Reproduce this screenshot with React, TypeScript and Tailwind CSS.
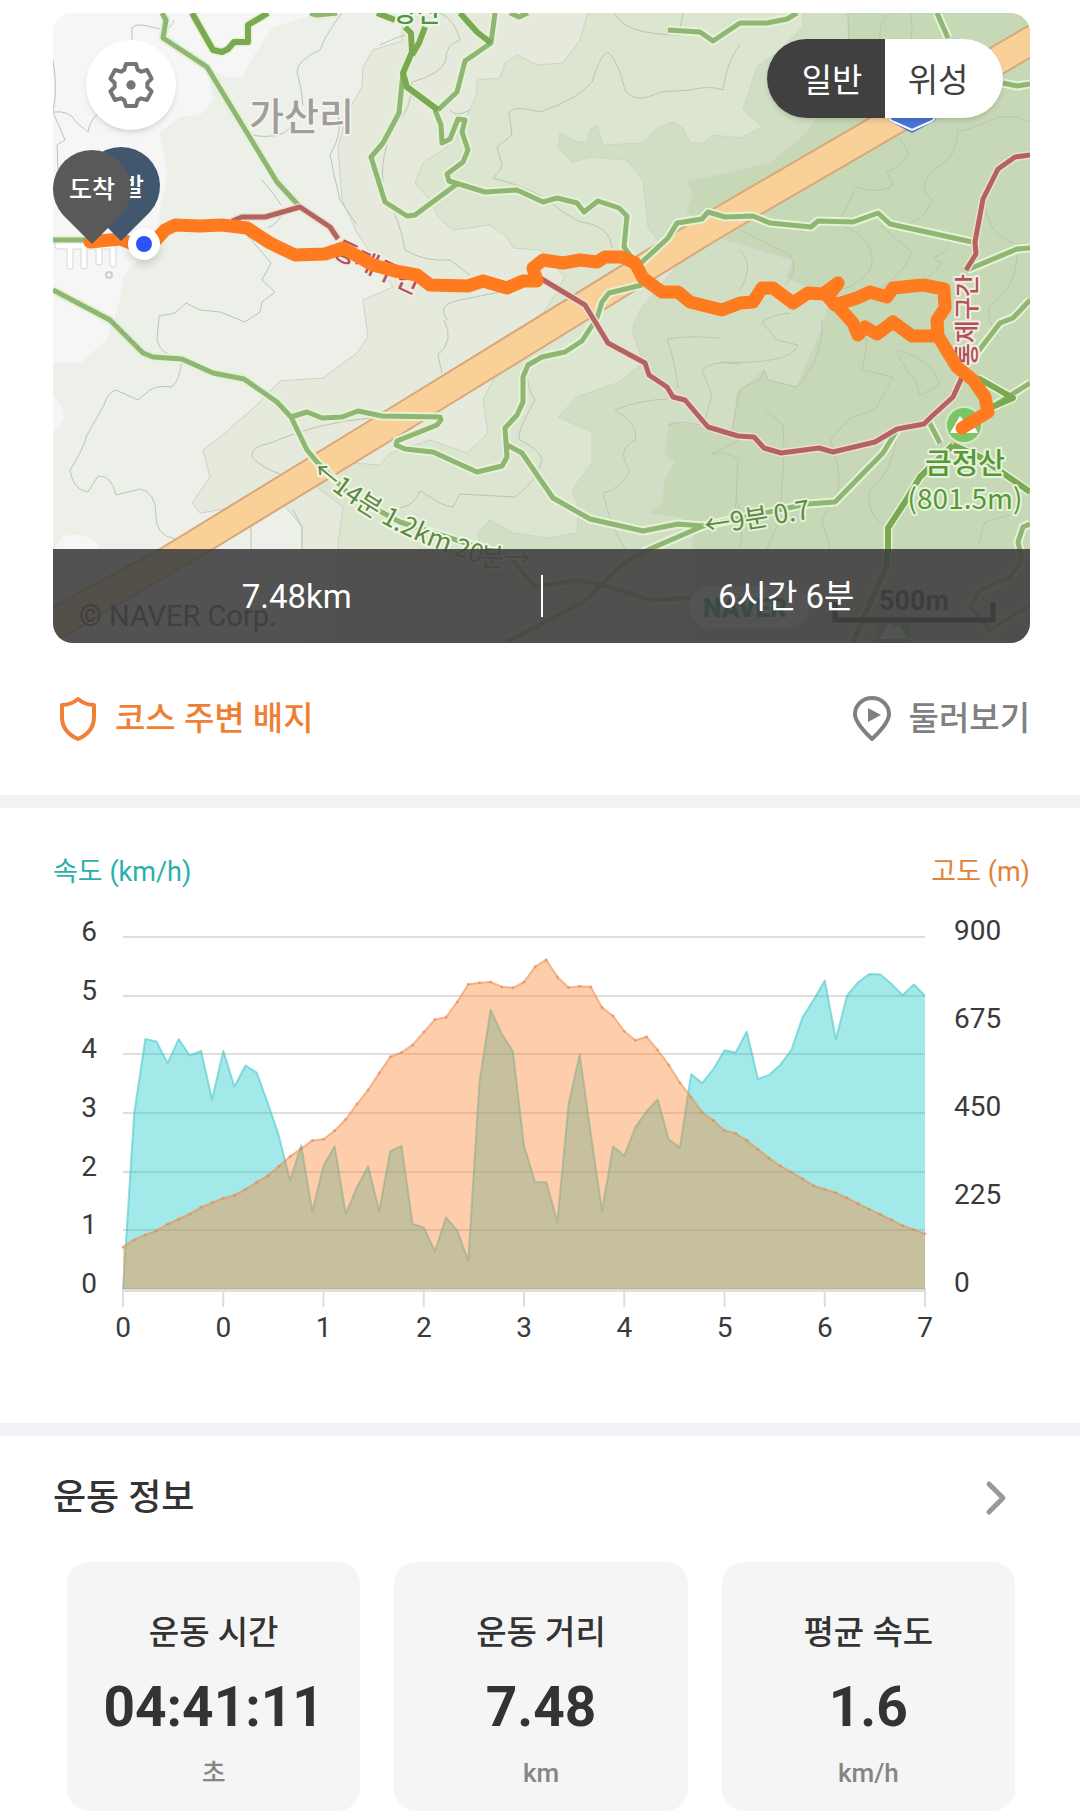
import React from 'react';

const SPEED = [
  0, 2.98, 4.26, 4.22, 3.85, 4.26, 3.98, 4.06, 3.23, 4.06, 3.45, 3.81, 3.69, 3.17, 2.61, 1.85, 2.45, 1.32,
  2.1, 2.43, 1.28, 1.73, 2.09, 1.33, 2.35, 2.44, 1.11, 1.05, 0.64, 1.22, 1.0, 0.48, 3.52, 4.76, 4.35, 4.05,
  2.44, 1.82, 1.82, 1.14, 3.15, 4.0, 2.64, 1.33, 2.43, 2.27, 2.76, 3.03, 3.23, 2.55, 2.41, 3.66, 3.51, 3.75,
  4.07, 4.03, 4.39, 3.58, 3.65, 3.82, 4.07, 4.63, 4.93, 5.26, 4.26, 5.0, 5.23, 5.37, 5.36, 5.2, 5.01, 5.19, 5.0,
];

const ALTITUDE = [
  107, 126, 138, 149, 166, 179, 192, 209, 221, 232, 240, 255, 273, 290, 314, 339, 359, 380,
  383, 405, 434, 473, 509, 552, 594, 605, 624, 657, 689, 695, 734, 779, 783, 785, 773, 770,
  785, 824, 842, 798, 771, 774, 773, 720, 698, 659, 636, 645, 611, 573, 528, 491, 452, 431,
  405, 398, 380, 357, 335, 315, 299, 282, 264, 255, 246, 233, 218, 204, 191, 177, 162, 152, 141,
];

const PLOT = { left: 123, right: 925, top: 937, bottom: 1289 };

const plotX = (i: number) => PLOT.left + (i * (PLOT.right - PLOT.left)) / 72;
const plotY = (ratio: number) => PLOT.bottom - ratio * (PLOT.bottom - PLOT.top);

const toLine = (values: number[], max: number) =>
  values.map((v, i) => `${plotX(i).toFixed(1)},${plotY(v / max).toFixed(1)}`).join(' ');

const toArea = (values: number[], max: number) =>
  `${PLOT.left},${PLOT.bottom} ${toLine(values, max)} ${PLOT.right},${PLOT.bottom}`;

const CONTOURS = [
  'M132 40V28Q136 23 147 26L160 29Q172 30 174 20',
  'M342 13Q325 35 320 50Q297 60 297 72Q302 90 303 105',
  'M53 60Q58 90 53 112Q70 110 76 122L88 132Q90 120 98 114',
  'M53 112L65 140L57 145L58 170',
  'M250 135Q280 140 290 128M336 110Q345 130 330 155Q335 180 340 200L357 225',
  'M262 180Q275 195 281 205M268 228Q280 222 282 212',
  'M247 235L260 250L271 263L262 280L275 292L262 302L260 312L245 322L220 312L200 310L186 303L175 313L159 316L157 340Q160 355 182 359Q180 380 172 387Q158 385 150 390L138 400L116 390Q108 392 104 405L87 435Q82 452 70 470Q73 490 88 492L98 476Q112 475 116 495L140 489Q156 492 156 515Q155 535 175 539',
  'M380 45Q395 38 405 35M440 13Q455 20 460 40Q445 45 446 60Q440 75 412 82Q412 110 395 125Q375 165 387 200Q400 220 405 250Q425 262 450 260L470 275',
  'M450 110Q455 118 470 110',
  'M493 178Q500 172 502 165L497 147L512 135L509 112Q515 105 540 112Q580 98 592 82Q600 55 608 52Q618 60 625 90Q635 105 660 92L690 90Q710 85 723 90Q727 60 740 45',
  'M493 178Q540 190 560 210L580 222Q610 225 612 248',
  'M614 13Q625 35 680 35M683 13L680 28',
  'M444 320Q455 340 438 355Q440 365 442 373M448 320Q435 305 460 300L500 292',
  'M252 457Q250 447 270 443Q320 422 370 418M252 457Q262 468 280 474M251 525V549M293 510L302 527V549',
  'M528 367Q525 385 535 400Q515 435 520 440Q540 450 542 460Q538 480 515 497L460 494L453 507Q440 505 430 497L420 491Q415 505 400 508',
  'M615 410Q640 400 667 399M615 410Q640 425 635 440Q615 450 630 470Q620 490 603 493Q610 525 625 549',
  'M667 340Q680 335 720 338M667 340Q675 360 678 388M740 364Q710 360 702 370L712 395Q708 410 705 420',
  'M668 425Q680 420 700 425M735 520L738 460Q730 450 712 454L740 440',
  'M848 13Q850 50 846 60M911 13Q915 40 904 60M880 40Q878 20 890 13',
  'M900 138L909 155Q895 170 887 172L893 185Q880 195 855 187Q848 210 840 217L800 232',
  'M1030 122Q1010 112 990 120Q970 130 958 131Q955 160 940 165Q920 180 925 192L932 200Q925 220 905 225',
  'M840 225Q880 240 870 270Q850 295 820 290M880 225L912 252Q905 275 870 295M947 240Q955 250 933 258L942 263Q930 280 915 283',
  'M740 230L790 255Q800 270 785 285M740 250Q755 265 740 290M720 362Q790 365 798 345L777 340L762 322Q770 315 790 313',
  'M822 320Q825 355 797 387L768 380L764 370L761 379L740 389L732 430M844 320Q870 330 866 350L862 370L893 377L875 410L850 418L830 440Q842 470 838 490L822 520L830 549',
  'M895 350Q920 355 933 370L940 385L920 395L915 380Q905 370 897 352',
  'M784 453L780 520L767 549M765 410L783 425L784 450M735 495Q745 520 740 549',
  'M897 430Q895 470 870 490Q865 515 888 528M1010 515L985 522L978 545',
  'M985 205Q990 245 1030 245M1017 255Q1015 290 990 305Q985 320 1000 340',
];

const TRAILS = [
  'M162 13L166 20L163 38L207 67L277 182L300 207',
  'M310 13L317 15L337 13',
  'M53 240H90',
  'M53 290L110 320L143 353L153 357L182 359L213 373L244 379L277 402L291 417L307 450L317 462L350 495L400 522L510 557L535 587L580 580L603 585L650 600L690 598',
  'M291 417L307 412L322 418L342 417L358 411L382 416L440 417L441 420L437 425L397 441L396 445L405 449L433 452L477 472L502 466L507 457L505 428L517 415L523 402V377L528 365L542 357L565 352L582 341L597 318L602 302L609 293L642 285',
  'M636 268L642 262L668 238L677 223L702 219L708 212L725 217L753 216L770 223L811 227L818 221L853 222L878 213L890 224L972 242',
  'M507 445L522 453L553 498L590 519L643 531L678 524L703 526L650 549L625 562L583 602L507 642',
  'M495 13L491 43L465 61L457 92L438 110',
  'M403 73L399 113L383 143L371 157L385 202L407 216L415 215L457 184',
  'M435 110L441 125L442 143L450 139L458 119L465 120L462 132L468 150L463 162L447 174L449 181L485 192L517 190L543 202L557 198L577 203L584 212L598 201L619 208L627 216L624 247L632 258',
  'M510 13L519 17L528 13',
  'M668 30L700 32L713 41L740 23H767L787 19L797 13',
  'M937 13L948 38',
  'M1003 83L1017 86L1030 84',
  'M967 270L1017 249L1030 248',
  'M1030 300L1013 318L1000 323L977 353',
  'M1030 383L992 407',
  'M897 430L883 453L835 502L807 504L703 526',
  'M928 420L940 443',
  'M1030 524L1023 527L1018 542L1022 560L1010 577L980 590L970 607L990 630L1030 605',
];

const MAIN_TRAILS = [
  'M192 13L213 50L222 52L228 49L234 42H248V25L268 13',
  'M377 13L395 20',
  'M460 13L477 32L491 43',
  'M405 27L411 33L412 52L403 73L407 87L438 110',
  'M425 27L419 43L412 55',
  'M978 378L1013 398L992 407',
  'M953 445L920 477L905 502L888 528V549L886 567L853 642',
  'M953 445L980 457L1030 492',
];

const CLOSED_TRAILS = [
  'M232 221L242 217H265L300 207L330 227L338 239',
  'M540 278L585 305L608 343L645 363L649 375L667 387L673 397L685 400L708 427L738 436L754 437L764 448L781 453L819 448L833 452L875 442L897 429L924 424L931 417L953 397L963 375',
  'M1030 155L1015 157L998 169L983 199L975 242L976 254L966 270',
];

const TRACK =
  'M90 242L120 239L133 244L152 244L165 230L175 225L200 226L222 225L247 228L270 243L295 255L325 254L343 248L373 265L395 271L417 275L430 285L468 286L483 281L507 288L523 281L537 281L533 268L543 260L563 263L580 260L597 262L605 257L622 257L635 263L643 278L662 292L678 292L690 302L722 310L740 303L753 302L762 288L773 288L793 303L808 293L823 294L838 283L828 297L835 305L857 298L870 292L887 297L893 288L923 285L944 289L945 308L937 320L938 336L912 336L893 322L877 334L865 327L858 335L853 323L835 303M938 336L957 367L973 380L985 397L988 412L962 428';

const CLOSED_LABEL = 'fill-[#b0525c] stroke-[#f3ebe0] stroke-[4px] font-medium';

const RouteMap: React.FC = () => (
  <svg
    viewBox="53 13 977 630"
    className="block w-full font-['Noto_Sans_CJK_KR',sans-serif]"
    role="img"
    aria-label="코스 지도"
  >
    {/* Terrain */}
    <rect x="53" y="13" width="977" height="630" fill="#ecf0e8" />
    <path
      fill="#f6f6f6"
      d="M53 13H320L273 27L253 57L243 77L227 78L207 67L213 100L200 115L180 117L160 132L163 153L168 173L162 200L155 240L123 277L120 300L107 340L80 363L57 362L53 365Z"
    />
    <path fill="#f6f6f6" d="M53 395Q70 415 60 425L53 432ZM56 549Q60 532 78 535Q98 538 100 549Z" />
    <g strokeWidth="1" stroke="#cdd3c6">
      <path
        fill="#e5eadc"
        d="M402 41L373 50L363 67L362 87L347 113L338 147L342 200L357 233L393 287L363 300L368 337L357 353L323 378L280 381L257 405L220 437L203 450L210 477L192 503L200 513L280 500L302 527V650H1040V5H402Z"
      />
      <path
        fill="#dbe5d0"
        d="M590 5L580 40L563 63L537 65L517 55L505 63L500 78L477 80V93L470 110L447 147L423 163L415 183L430 200L438 217L453 230L490 225L507 237L513 248L540 250L565 277L550 303L493 380L483 400L488 433L467 453L430 440L390 453L380 465L353 463L317 487L343 507L338 543V650H1040V5Z"
      />
      <path
        fill="#d0dfc3"
        d="M803 5V27L780 50L757 67L743 110L763 127L740 138L713 135L703 143L690 143L683 128L673 122L657 128L643 143L603 145L597 125L590 130L587 142L577 142L560 133L558 147L572 162L590 157L627 160L643 180L648 227L657 240L690 250L640 310L632 330L643 363L617 383L577 397L558 417L592 432V463L572 490L578 507L577 533L547 538L513 533L490 520L478 533L483 560V650H1040V5Z"
      />
      <path
        fill="#c6d8b5"
        d="M848 5V50L830 100L807 133L770 163L727 173L688 182L693 193L687 213L720 238L793 260L787 277L830 300L820 333L797 387L768 380L764 370L737 393L733 430L670 423L665 453L675 463L665 480L663 503L650 513L680 517L693 527V650H1040V5Z"
      />
    </g>
    <g fill="none" stroke="#bcc5b2" strokeWidth="1">
      {CONTOURS.map((d) => (
        <path key={d} d={d} />
      ))}
    </g>

    {/* Expressway */}
    <path
      d="M40 614L160 549L400 402L720 205L1040 19V52L720 238L587 320L400 435L213 549L40 650Z"
      fill="#f9d198"
      stroke="#d9a679"
      strokeWidth="2"
    />
    <path d="M886 100H938Q942 118 931 123L912 133L893 123Q884 118 886 100Z" fill="#4a76d8" />
    <path d="M889 118Q891 121 894 122L912 130L930 122Q933 121 935 118" fill="none" stroke="#fff" strokeWidth="2" />

    {/* Trails */}
    <g fill="none" strokeLinejoin="round">
      <g stroke="#e4f2d6" strokeWidth="9">
        {[...TRAILS, ...MAIN_TRAILS].map((d) => (
          <path key={d} d={d} />
        ))}
      </g>
      <g stroke="#90b673" strokeWidth="5">
        {TRAILS.map((d) => (
          <path key={d} d={d} />
        ))}
      </g>
      <g stroke="#7ba952" strokeWidth="6">
        {MAIN_TRAILS.map((d) => (
          <path key={d} d={d} />
        ))}
      </g>
      {CLOSED_TRAILS.map((d) => (
        <g key={d}>
          <path d={d} stroke="#f0ddd0" strokeWidth="8" />
          <path d={d} stroke="#b26560" strokeWidth="5" />
        </g>
      ))}
    </g>

    {/* Gate outline */}
    <g fill="none" strokeLinecap="round" strokeLinejoin="round">
      <path d="M58 246H113V264M70 248V266M84 248V266M99 248V262" stroke="#d6d6d6" strokeWidth="7" />
      <path d="M58 246H113V264M70 248V266M84 248V266M99 248V262" stroke="#fff" strokeWidth="5" />
      <circle cx="109" cy="275" r="3" stroke="#cfcfcf" strokeWidth="2" />
    </g>

    {/* Place names */}
    <g style={{ paintOrder: 'stroke' }} strokeLinejoin="round">
      <text x="249" y="130" fontSize="38" className="fill-[#a39c99] stroke-[#f4f6f2] stroke-[3px] font-medium">
        가산리
      </text>
      <text x="393" y="22" fontSize="26" className="fill-[#4f9440] stroke-[#eef6e6] stroke-[4px] font-medium">
        양산
      </text>
      <text x="332" y="256" fontSize="25" transform="rotate(25 332 256)" className={CLOSED_LABEL}>
        통제구간
      </text>
      <text x="976" y="366" fontSize="25" transform="rotate(-90 976 366)" className={CLOSED_LABEL}>
        통제구간
      </text>
      <path id="trail-time" d="M311 473Q350 507 395 530T490 566L545 568" fill="none" />
      <text fontSize="26" className="fill-[#5d8a40] stroke-[#eff6e6] stroke-[4px]">
        <textPath href="#trail-time">←14분 1.2km 20분→</textPath>
      </text>
      <text
        x="706"
        y="535"
        fontSize="26"
        transform="rotate(-9 706 535)"
        className="fill-[#5d8a40] stroke-[#e4f0d8] stroke-[4px]"
      >
        ←9분 0.7
      </text>
      <g textAnchor="middle" className="fill-[#559838] stroke-[#e8f3dc] stroke-[4px]">
        <text x="965" y="474" fontSize="29" className="font-medium">
          금정산
        </text>
        <text x="965" y="509" fontSize="28">
          (801.5m)
        </text>
      </g>
    </g>
    <circle cx="964" cy="425" r="18" fill="#7cc465" stroke="#d3ebc4" strokeWidth="2" />
    <path d="M950 433L960 416L965 422L969 417L978 433Z" fill="#fff" />
    <circle cx="893" cy="632" r="17" fill="#7cc465" />
    <path d="M879 639L890 622L895 628L899 624L908 639Z" fill="#fff" />

    {/* Map attribution and scale */}
    <text x="79" y="626" fontSize="29" className="fill-[#333] font-['Roboto']">
      © NAVER Corp.
    </text>
    <rect x="689" y="586" width="120" height="42" rx="21" fill="#fff" opacity="0.9" />
    <text x="703" y="617" fontSize="26" className="fill-[#03a04a] font-['Roboto'] font-black">
      NAVER
    </text>
    <text x="914" y="610" fontSize="27" textAnchor="middle" className="fill-[#222] font-['Roboto'] font-bold">
      500m
    </text>
    <path d="M835 602V620H993V602" fill="none" stroke="#222" strokeWidth="5" />

    {/* Recorded track */}
    <path d={TRACK} fill="none" stroke="#ff7b1f" strokeWidth="13" strokeLinejoin="round" strokeLinecap="round" />

    {/* Start and finish pins */}
    <g fontSize="25" textAnchor="middle" className="font-medium">
      <path d="M121 241L92 212A39 39 0 1 1 150 212Z" fill="#40576e" />
      <text x="121" y="196" fill="#fff">
        출발
      </text>
      <path d="M92 244L63 215A39 39 0 1 1 121 215Z" fill="#595959" />
      <text x="92" y="198" fill="#fff">
        도착
      </text>
    </g>
    <g className="drop-shadow-lg">
      <circle cx="144" cy="244" r="16" fill="#fff" />
    </g>
    <circle cx="144" cy="244" r="8" fill="#2c54f4" />
  </svg>
);

const GearIcon: React.FC = () => (
  <svg viewBox="-72 -72 144 144" className="size-12" aria-hidden="true">
    <path
      d="M-15 -63L15 -63L20 -46L30 -40L48 -45L62 -19L49 -6L49 6L62 19L48 45L30 40L20 46L15 63L-15 63L-20 46L-30 40L-48 45L-62 19L-49 6L-49 -6L-62 -19L-48 -45L-30 -40L-20 -46Z"
      fill="none"
      stroke="#757575"
      strokeWidth="12"
      strokeLinejoin="round"
    />
    <circle r="14" fill="#757575" />
  </svg>
);

const ShieldIcon: React.FC = () => (
  <svg viewBox="0 0 38 46" className="h-[46px] w-[38px]" aria-hidden="true">
    <path
      d="M19 3Q26 9 35 9V21Q35 36 19 43Q3 36 3 21V9Q12 9 19 3Z"
      fill="none"
      stroke="#f08036"
      strokeWidth="4"
      strokeLinejoin="round"
    />
  </svg>
);

const PlayPinIcon: React.FC = () => (
  <svg viewBox="0 0 38 46" className="h-[46px] w-[38px]" aria-hidden="true">
    <path
      d="M19 43Q2 27 2 18A17 16 0 0 1 36 18Q36 27 19 43Z"
      fill="none"
      stroke="#808080"
      strokeWidth="4"
      strokeLinejoin="round"
    />
    <path d="M15 12L28 19L15 26Z" fill="#808080" />
  </svg>
);

const ActivityChart: React.FC = () => (
  <svg
    viewBox="53 908 977 440"
    className="mt-[18px] block w-full fill-[#3a3a3c] font-['Roboto',sans-serif]"
    role="img"
    aria-label="속도와 고도"
  >
    <g stroke="#dedede" strokeWidth="2">
      {[6, 5, 4, 3, 2, 1].map((v) => (
        <line key={v} x1={PLOT.left} x2={PLOT.right} y1={Math.round(plotY(v / 6))} y2={Math.round(plotY(v / 6))} />
      ))}
      <line x1={PLOT.left - 1} x2={PLOT.right + 1} y1="1290" y2="1290" strokeWidth="4" />
      {[0, 1, 2, 3, 4, 5, 6, 7, 8].map((i) => (
        <line key={i} x1={plotX(i * 9)} x2={plotX(i * 9)} y1="1291" y2="1307" />
      ))}
    </g>
    <g strokeWidth="2" strokeLinejoin="round">
      <polygon points={toArea(SPEED, 6)} fill="#19c8ca" fillOpacity="0.4" />
      <polyline points={toLine(SPEED, 6)} fill="none" stroke="#3fc4c8" strokeOpacity="0.55" />
      <polygon points={toArea(ALTITUDE, 900)} fill="#fc822d" fillOpacity="0.4" />
      <polyline points={toLine(ALTITUDE, 900)} fill="none" stroke="#ee8a4c" strokeOpacity="0.55" />
    </g>
    <g fill="#d9814a" fillOpacity="0.5">
      {ALTITUDE.map((v, i) => (
        <circle key={i} cx={plotX(i)} cy={plotY(v / 900)} r="1.5" />
      ))}
    </g>
    <g fontSize="28" textAnchor="middle">
      {[6, 5, 4, 3, 2, 1, 0].map((v) => (
        <text key={v} x="89" y={Math.round(plotY(v / 6)) + 4}>
          {v}
        </text>
      ))}
      {[0, 0, 1, 2, 3, 4, 5, 6, 7].map((v, i) => (
        <text key={i} x={plotX(i * 9)} y="1337">
          {v}
        </text>
      ))}
    </g>
    <g fontSize="28">
      {[900, 675, 450, 225, 0].map((v) => (
        <text key={v} x="954" y={Math.round(plotY(v / 900)) + 3}>
          {v}
        </text>
      ))}
    </g>
  </svg>
);

const STATS = [
  { title: '운동 시간', value: '04:41:11', unit: '초' },
  { title: '운동 거리', value: '7.48', unit: 'km' },
  { title: '평균 속도', value: '1.6', unit: 'km/h' },
];

const App: React.FC = () => {
  return (
    <main className="w-full bg-white pt-[13px] pb-2 font-['Roboto','Noto_Sans_CJK_KR',sans-serif] text-[#333]">
      {/* Course map */}
      <section className="relative mr-[50px] ml-[53px] overflow-hidden rounded-[20px]">
        <RouteMap />
        <button
          type="button"
          aria-label="설정"
          className="absolute top-[27px] left-[33px] flex size-[90px] items-center justify-center rounded-full bg-white shadow-md"
        >
          <GearIcon />
        </button>
        <div className="absolute top-[26px] right-[27px] flex h-[79px] w-[236px] overflow-hidden rounded-full text-[33px] shadow-md">
          <button type="button" aria-pressed="true" className="flex-1 bg-[#404040] pt-1 pl-3 text-white">
            일반
          </button>
          <button type="button" aria-pressed="false" className="flex-1 bg-white pt-1 pr-3 text-[#404040]">
            위성
          </button>
        </div>
        <div className="absolute inset-x-0 bottom-0 flex h-[94px] items-center bg-[#404040]/90 text-center text-[33px] text-white">
          <p className="flex-1 pt-0.5">7.48km</p>
          <span className="h-[42px] w-[2px] bg-white" />
          <p className="flex-1 pt-0.5">6시간 6분</p>
        </div>
      </section>

      <div className="flex items-center justify-between pt-[52px] pr-[50px] pb-[52px] pl-[59px] text-[33px] leading-[48px] font-medium">
        <button type="button" className="flex items-center gap-[18px] text-[#ee7f35]">
          <ShieldIcon />
          코스 주변 배지
        </button>
        <button type="button" className="flex items-center gap-[18px] text-[#808080]">
          <PlayPinIcon />
          둘러보기
        </button>
      </div>

      <div className="h-[13px] bg-[#f0f2f5]" />

      {/* Speed and altitude */}
      <section className="pt-[46px] pr-[50px] pb-[75px] pl-[53px]">
        <div className="flex justify-between text-[27px] leading-9">
          <span className="text-[#2bb0a9]">속도 (km/h)</span>
          <span className="text-[#e0833c]">고도 (m)</span>
        </div>
        <ActivityChart />
      </section>

      <div className="h-[13px] bg-[#f0f2f5]" />

      {/* Workout summary */}
      <section className="pt-[38px]">
        <div className="flex items-center justify-between pr-[71px] pl-[53px]">
          <h2 className="text-[36px] leading-[48px] font-medium">운동 정보</h2>
          <button type="button" aria-label="운동 정보 더보기">
            <svg viewBox="0 0 24 36" className="h-9 w-6" aria-hidden="true">
              <path
                d="M4 4L18 18L4 32"
                fill="none"
                stroke="#999"
                strokeWidth="5"
                strokeLinecap="round"
                strokeLinejoin="round"
              />
            </svg>
          </button>
        </div>
        <ul className="mt-10 grid grid-cols-3 gap-[34px] pr-[65px] pl-[67px] text-center">
          {STATS.map((stat) => (
            <li key={stat.title} className="rounded-[22px] bg-[#f5f5f5] pt-[49px] pb-[22px]">
              <h3 className="text-[33px] leading-[44px] font-medium">{stat.title}</h3>
              <p className="mt-5 text-[55px] leading-[64px] font-bold">{stat.value}</p>
              <p className="mt-[18px] text-[26px] leading-8 font-medium text-[#858585]">{stat.unit}</p>
            </li>
          ))}
        </ul>
      </section>
    </main>
  );
};

export default App;
